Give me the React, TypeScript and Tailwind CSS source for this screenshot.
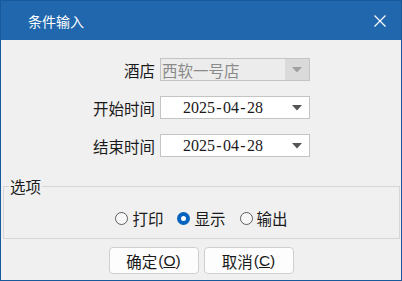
import React from "react";

const CJK = { fontFamily: '"Noto Sans CJK SC", "Noto Sans", sans-serif' };

function Arrow({ color }: { color: string }) {
  return (
    <svg width="10" height="6" viewBox="0 0 10 6">
      <path d="M0 0 L10 0 L5 5.5 Z" fill={color} />
    </svg>
  );
}

function DateText() {
  const parts = ["2025", "-", "04", "-", "28"];
  return (
    <span
      className="flex-1 pl-[22px] text-[16px] leading-[20px] text-[#1a1a1a] flex items-center"
      style={{ fontFamily: '"Liberation Serif", serif' }}
    >
      {parts.map((p, i) =>
        p === "-" ? (
          <span key={i} className="inline-block w-[8px] text-center">
            -
          </span>
        ) : (
          <span key={i}>{p}</span>
        )
      )}
    </span>
  );
}

function Radio({ checked, label }: { checked?: boolean; label: string }) {
  return (
    <label className="flex items-center gap-[4px]">
      {checked ? (
        <span className="w-[13px] h-[13px] rounded-full bg-[#0563bd] flex items-center justify-center">
          <span className="w-[5px] h-[5px] rounded-full bg-white" />
        </span>
      ) : (
        <span className="w-[13px] h-[13px] rounded-full border border-[#5f5f5f] bg-[#f7f7f7]" />
      )}
      <span className="text-[15.5px] leading-[20px] text-[#1a1a1a]">{label}</span>
    </label>
  );
}

export default function App() {
  return (
    <div
      className="w-[402px] h-[281px] border border-[#17599a] bg-[#f0f0f0] flex flex-col overflow-hidden"
      style={CJK}
    >
      <div className="h-[39px] bg-[#2067ae] flex items-center justify-between pl-[27px] pr-[15px] shrink-0">
        <span className="text-white text-[14px] leading-[18px]">条件输入</span>
        <svg width="12" height="12" viewBox="0 0 12 12">
          <path d="M0.5 0.5 L11.5 11.5 M11.5 0.5 L0.5 11.5" stroke="white" strokeWidth="1.2" />
        </svg>
      </div>

      <div className="flex flex-col gap-[15px] pt-[18px]">
        <div className="flex items-center h-[23px]">
          <span className="w-[154px] text-right text-[15.5px] leading-[20px] text-[#1a1a1a]">酒店</span>
          <div className="ml-[5px] w-[150px] h-[23px] border border-[#c4c4c4] bg-[#ececec] flex items-center">
            <span className="flex-1 pl-[1px] text-[15.5px] leading-[20px] text-[#8a8a8a]">西软一号店</span>
            <div className="w-[24px] h-full bg-[#dadada] flex items-center justify-center">
              <Arrow color="#a0a0a0" />
            </div>
          </div>
        </div>
        <div className="flex items-center h-[23px]">
          <span className="w-[154px] text-right text-[15.5px] leading-[20px] text-[#1a1a1a]">开始时间</span>
          <div className="ml-[5px] w-[150px] h-[23px] border border-[#c4c4c4] bg-white flex items-center">
            <DateText />
            <div className="w-[24px] flex items-center justify-center">
              <Arrow color="#555555" />
            </div>
          </div>
        </div>
        <div className="flex items-center h-[23px]">
          <span className="w-[154px] text-right text-[15.5px] leading-[20px] text-[#1a1a1a]">结束时间</span>
          <div className="ml-[5px] w-[150px] h-[23px] border border-[#c4c4c4] bg-white flex items-center">
            <DateText />
            <div className="w-[24px] flex items-center justify-center">
              <Arrow color="#555555" />
            </div>
          </div>
        </div>
      </div>

      <fieldset className="mt-[21px] ml-[2px] mr-[1px] border border-[#d6d6d6] h-[61px] px-0 pb-0">
        <legend className="ml-[5px] px-[1px] text-[15.5px] leading-[16px] text-[#1a1a1a]">选项</legend>
        <div className="flex items-center justify-center gap-[14px] pt-[14px]">
          <Radio label="打印" />
          <Radio label="显示" checked />
          <Radio label="输出" />
        </div>
      </fieldset>

      <div className="flex justify-center gap-[5px] mt-[8px]">
        <button className="w-[90px] h-[27px] rounded-[4px] border border-[#cfcfcf] bg-[#fdfdfd] text-[15.5px] leading-[20px] text-[#1a1a1a] flex items-center justify-center">
          确定<span style={{ fontFamily: '"Liberation Sans", sans-serif' }} className="ml-[1px] text-[#1a1a1a]">(<span className="underline">O</span>)</span>
        </button>
        <button className="w-[90px] h-[27px] rounded-[4px] border border-[#cfcfcf] bg-[#fdfdfd] text-[15.5px] leading-[20px] text-[#1a1a1a] flex items-center justify-center">
          取消<span style={{ fontFamily: '"Liberation Sans", sans-serif' }} className="ml-[1px] text-[#1a1a1a]">(<span className="underline">C</span>)</span>
        </button>
      </div>
    </div>
  );
}
